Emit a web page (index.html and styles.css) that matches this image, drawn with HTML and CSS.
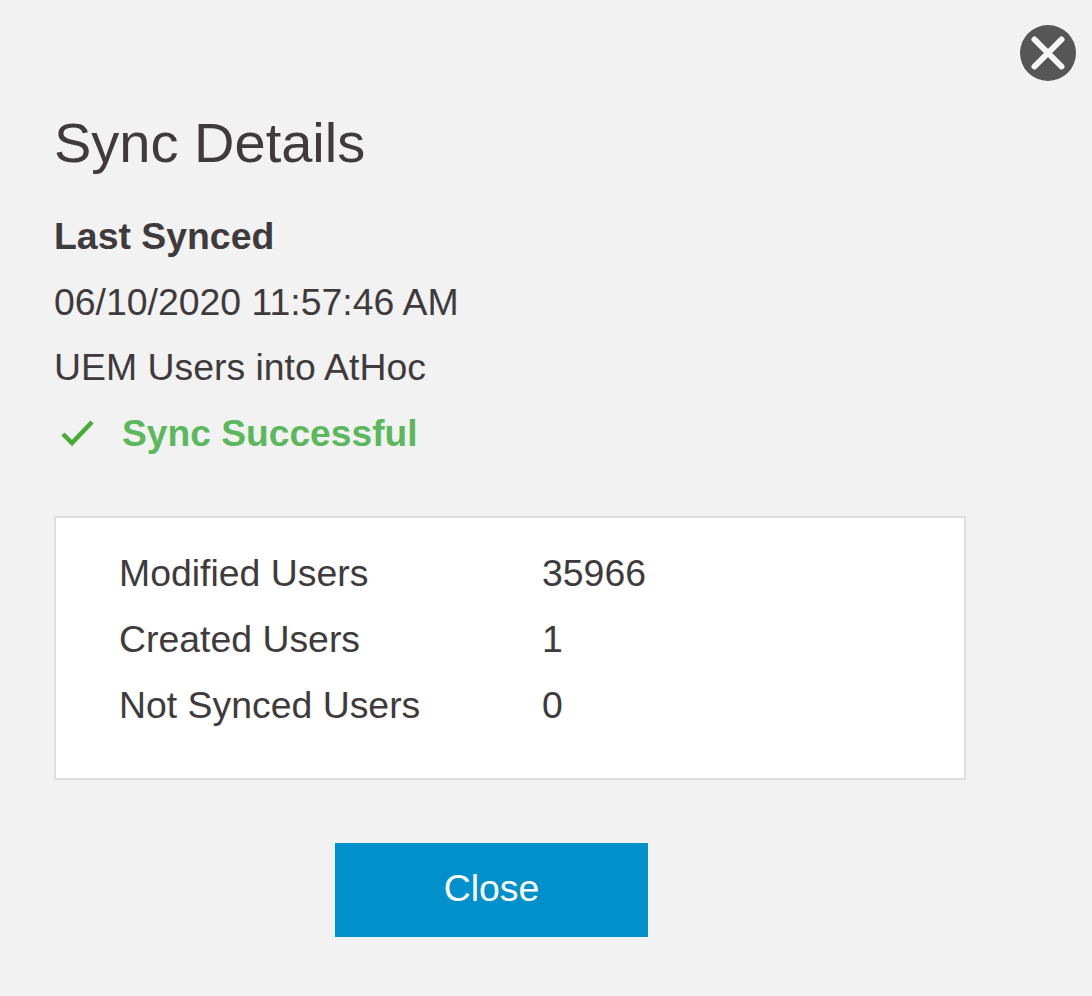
FILE: index.html
```html
<!DOCTYPE html>
<html lang="en">
<head>
<meta charset="utf-8">
<title>Sync Details</title>
<link rel="stylesheet" href="styles.css">
</head>
<body>
<div class="dialog">
  <button class="close-x" aria-label="Close">
    <svg width="58" height="58" viewBox="0 0 58 58"><circle cx="29" cy="29" r="28" fill="#565656"/><path d="M15.5 15.5L42.5 42.5M42.5 15.5L15.5 42.5" stroke="#f7f7f7" stroke-width="6" stroke-linecap="round" fill="none"/></svg>
  </button>
  <h1 class="title">Sync Details</h1>
  <div class="line strong">Last Synced</div>
  <div class="line">06/10/2020 11:57:46 AM</div>
  <div class="line">UEM Users into AtHoc</div>
  <div class="line status">
    <svg class="check" width="36" height="30" viewBox="0 0 36 30"><path d="M3 15L12 24L32 3" stroke="#45ad34" stroke-width="4.5" fill="none"/></svg>
    <span>Sync Successful</span>
  </div>
  <div class="panel">
    <div class="row"><span class="label">Modified Users</span><span>35966</span></div>
    <div class="row"><span class="label">Created Users</span><span>1</span></div>
    <div class="row"><span class="label">Not Synced Users</span><span>0</span></div>
  </div>
  <div class="actions"><button class="btn">Close</button></div>
</div>
</body>
</html>
```
FILE: styles.css
```css
* { box-sizing: border-box; }
html, body { margin: 0; height: 100%; }
body { background: #f2f2f2; font-family: "Liberation Sans", Arial, sans-serif; color: #3f3a3c; overflow: hidden; }
.dialog { height: 996px; padding: 112px 0 0 54px; position: relative; }
.close-x { position: absolute; top: 24px; right: 15px; width: 58px; height: 58px; padding: 0; border: 0; background: none; }
.close-x svg { display: block; }
.title { margin: 0 0 30px; font-size: 56px; line-height: 62px; font-weight: 400; }
.line { font-size: 37.4px; line-height: 65.6px; height: 65.6px; }
.strong { font-weight: 700; }
.status { display: flex; align-items: center; gap: 26px; padding-left: 6px; color: #5cb85c; font-weight: 700; font-size: 37.2px; }
.panel { width: 912px; height: 264px; margin-top: 49.6px; padding: 22px 0 0 63px; background: #fff; border: 2px solid #dedede; }
.row { display: flex; font-size: 37.4px; line-height: 66px; }
.label { width: 423px; }
.actions { margin-top: 63px; padding-left: 281px; }
.btn { display: block; width: 313px; height: 94px; padding: 0 0 3px; border: 0; background: #0091cc; color: #fff; font: 400 37.4px "Liberation Sans", Arial, sans-serif; }
```
